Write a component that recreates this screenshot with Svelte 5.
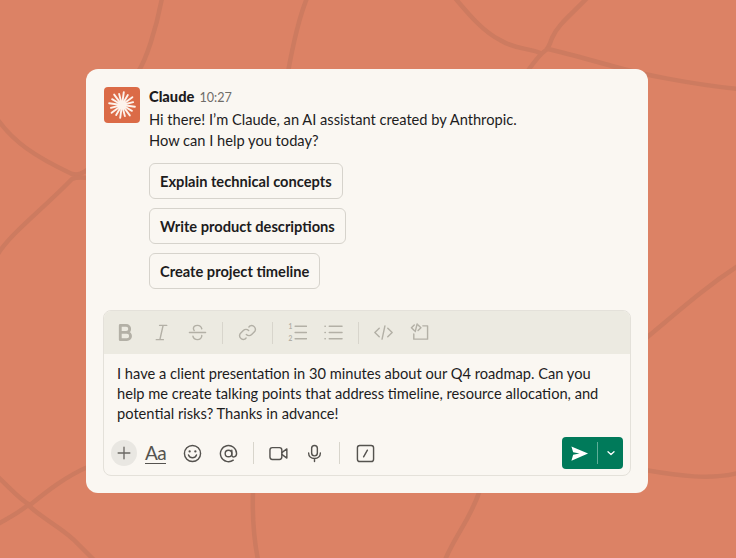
<script>
	const prompts = ['Explain technical concepts', 'Write product descriptions', 'Create project timeline'];
	const rays = Array.from({ length: 16 }, (_, i) => i * 22.5);
</script>

<div class="page">
	<svg class="veins" viewBox="0 0 736 558" aria-hidden="true">
		<g fill="none" stroke="#cd7b60" stroke-width="4.5" stroke-linecap="round">
			<path d="M162 -2C156 30 146 60 138 72" />
			<path d="M307 -2C298 20 292 50 288 72" />
			<path d="M455 -2C470 16 484 32 500 40C516 50 530 48 540 53" />
			<path d="M587 -2C572 14 558 24 552 38C550 44 548 48 546 50C540 54 534 62 527 72" />
			<path d="M548 49C570 54 590 60 612 66C640 74 690 84 738 89" />
			<path d="M-2 120C14 142 34 156 72 174C80 176 84 172 90 168" />
			<path d="M-2 254C10 234 44 208 72 179C78 176 84 178 90 178" />
			<path d="M-2 477C10 488 20 500 30 505C46 492 66 476 90 466" />
			<path d="M-2 524C12 516 20 512 28 505C44 520 66 530 78 544C84 550 90 556 94 560" />
			<path d="M253 490C252 520 254 540 258 560" />
			<path d="M480 490C470 520 456 534 445 560" />
			<path d="M645 339C680 310 704 288 738 266" />
			<path d="M645 470C680 476 710 480 738 473" />
		</g>
	</svg>

	<div class="card">
		<div class="message">
			<div class="avatar">
				<svg viewBox="0 0 36 36" width="36" height="36">
					{#each rays as angle, i}
						<path
							d="M18 14L18 {i % 2 ? 6.500 : 5}"
							transform="rotate({angle + 8} 18 18)"
							stroke="#fdf3ec"
							stroke-width="1.900"
							stroke-linecap="round"
						/>
					{/each}
					<circle cx="18" cy="18" r="4.500" fill="#fdf3ec" />
				</svg>
			</div>
			<div class="body">
				<div class="meta"><strong>Claude</strong><span>10:27</span></div>
				<p>Hi there! I’m Claude, an AI assistant created by Anthropic.<br />How can I help you today?</p>
				<div class="prompts">
					{#each prompts as prompt}
						<button>{prompt}</button>
					{/each}
				</div>
			</div>
		</div>

		<div class="editor">
			<div class="format">
				<svg class="i b" viewBox="0 0 20 20"><path d="M4.500 2.500h6.200a3.700 3.700 0 0 1 0 7.400H4.500zM4.500 9.900h7a3.800 3.800 0 0 1 0 7.600h-7z" /></svg>
				<svg class="i" viewBox="0 0 20 20"><path d="M8 2.500h7.500M4.500 17.500h7.500M11.700 2.500 8.300 17.500" /></svg>
				<svg class="i" viewBox="0 0 20 20"><path d="M1.500 10h17M14.500 6C13.900 3.800 12 2.500 10 2.500c-2.400 0-4.300 1.300-4.300 3.400 0 .8.300 1.500.8 2M14.500 13c.2 3-2 4.500-4.500 4.500-2.600 0-4.400-1.300-4.800-3.600" /></svg>
				<i class="sep"></i>
				<svg class="i" viewBox="0 0 20 20"><path d="M11.500 4.300l1.300-1.300a4 4 0 0 1 5 5.600l-3.400 3.400a4 4 0 0 1-5.600 0M8.500 15.700l-1.300 1.300a4 4 0 0 1-5-5.600l3.400-3.400a4 4 0 0 1 5.600 0" /></svg>
				<i class="sep"></i>
				<svg class="i" viewBox="0 0 20 20"><path d="M7.500 3.500h12M7.500 10h12M7.500 16.500h12" /><text x="0.500" y="6.500">1</text><text x="0.500" y="18.500">2</text></svg>
				<svg class="i" viewBox="0 0 20 20"><path d="M5.500 3.500h13.500M5.500 10h13.500M5.500 16.500h13.500M1 3.500h.4M1 10h.4M1 16.500h.4" /></svg>
				<i class="sep"></i>
				<svg class="i" viewBox="0 0 20 20"><path d="M5.500 5.500.9 10l4.600 4.500M14.500 5.500l4.600 4.500-4.600 4.500M11.500 3 8.500 17" /></svg>
				<svg class="i" viewBox="0 0 20 20"><path d="M4.500 2 1.500 5l3 3M8.500 8l3-3-3-3M5.500 9l2-8M13.500 3h5v14H4v-5.500" /></svg>
			</div>
			<div class="draft">I have a client presentation in 30 minutes about our Q4 roadmap. Can you help me create talking points that address timeline, resource allocation, and potential risks? Thanks in advance!</div>
			<div class="actions">
				<span class="plus"><svg viewBox="0 0 20 20" width="18" height="18"><path d="M10 3.500v13M3.500 10h13" /></svg></span>
				<span class="aa">Aa</span>
				<svg class="a" viewBox="0 0 20 20"><circle cx="10" cy="10" r="8.500" /><path d="M5.800 11.500c.8 2 2.200 3 4.200 3s3.400-1 4.200-3" /><circle class="dot" cx="7" cy="7.800" r="1.200" /><circle class="dot" cx="13" cy="7.800" r="1.200" /></svg>
				<svg class="a" viewBox="0 0 20 20"><circle cx="10" cy="10" r="3.500" /><path d="M13.500 6.500v5c0 3.500 5 2.500 5-1.500a8.500 8.500 0 1 0-3.500 7" /></svg>
				<i class="sep low"></i>
				<svg class="a" viewBox="0 0 20 20"><rect x="1" y="3.800" width="12.500" height="12.500" rx="2.500" /><path d="M13.500 9 18.800 5.200v9.600L13.500 11" /></svg>
				<svg class="a" viewBox="0 0 20 20"><rect x="7" y="1.500" width="6" height="11" rx="3" /><path d="M3.800 9.500c0 3.500 2.600 5.800 6.200 5.800s6.200-2.300 6.200-5.800M10 15.300v3.200" /></svg>
				<i class="sep low"></i>
				<svg class="a" viewBox="0 0 20 20"><rect x="1.500" y="1.500" width="17" height="17" rx="2.500" /><path d="M12 6.500 8 13.500" /></svg>
				<div class="send">
					<span class="go"><svg viewBox="0 0 20 20" width="19" height="19"><path d="M1.500 2.500 19 10 1.500 17.500l1.800-6.300L10 10 3.300 8.800z" /></svg></span>
					<span class="more"><svg viewBox="0 0 10 10" width="10" height="10"><path d="M2 3.800 5 6.600l3-2.800" /></svg></span>
				</div>
			</div>
		</div>
	</div>
</div>

<style>
	:global(body) {
		background: #dc8265;
	}

	.page {
		position: relative;
		box-sizing: border-box;
		width: 736px;
		height: 558px;
		padding: 69px 88px 65px 86px;
		background: #dc8265;
		overflow: hidden;
		font-family: Lato, 'Liberation Sans', sans-serif;
		color: #1d1c1d;
	}

	.veins {
		position: absolute;
		inset: 0;
		width: 100%;
		height: 100%;
	}

	.card {
		position: relative;
		box-sizing: border-box;
		height: 424px;
		padding: 18px 17px 17px 17px;
		display: flex;
		flex-direction: column;
		justify-content: space-between;
		background: #faf7f2;
		border-radius: 12px;
	}

	.message {
		display: flex;
		gap: 9px;
		padding-left: 1px;
	}

	.avatar {
		flex: none;
		width: 36px;
		height: 36px;
		border-radius: 4px;
		background: #db6b47;
	}

	.avatar svg {
		display: block;
	}

	.meta {
		display: flex;
		align-items: baseline;
		gap: 5px;
		line-height: 20px;
	}

	.meta strong {
		font-size: 14.650px;
		font-weight: 900;
	}

	.meta span {
		font-size: 12.600px;
		color: #6f6c68;
	}

	p {
		margin: 1px 0 0;
		font-size: 14.650px;
		line-height: 21px;
	}

	.prompts {
		display: flex;
		flex-direction: column;
		align-items: flex-start;
		gap: 9px;
		margin-top: 12px;
	}

	button {
		height: 36px;
		padding: 0 10px;
		font: 700 14.650px Lato, 'Liberation Sans', sans-serif;
		color: #1d1c1d;
		background: #faf7f2;
		border: 1px solid #d6d3cc;
		border-radius: 6px;
	}

	.editor {
		border: 1px solid #e4e1da;
		border-radius: 8px;
		overflow: hidden;
	}

	.format {
		height: 43px;
		padding: 0 11.500px;
		display: flex;
		align-items: center;
		gap: 15px;
		background: #eceae1;
	}

	.format .i {
		width: 19px;
		height: 19px;
		fill: none;
		stroke: #b3b0a6;
		stroke-width: 1.500;
		stroke-linecap: round;
		stroke-linejoin: round;
		flex: none;
	}

	.format .i + .i {
		margin-left: 2px;
	}

	.format .b {
		stroke-width: 3;
	}

	.format text {
		font-size: 7px;
		font-weight: 700;
		fill: #b3b0a6;
		stroke: none;
	}

	.sep {
		flex: none;
		width: 1px;
		height: 22px;
		background: #d8d5cc;
	}

	.draft {
		padding: 10px 13px 0;
		font-size: 14.650px;
		line-height: 20px;
		height: 77px;
		box-sizing: border-box;
	}

	.actions {
		height: 44px;
		padding: 0 7px;
		display: flex;
		align-items: center;
	}

	.plus {
		display: flex;
		align-items: center;
		justify-content: center;
		width: 26px;
		height: 26px;
		border-radius: 50%;
		background: #e9e7e2;
		margin-right: 8px;
	}

	.plus svg {
		fill: none;
		stroke: #6b6964;
		stroke-width: 1.500;
		stroke-linecap: round;
	}

	.aa {
		font-size: 19px;
		line-height: 20px;
		color: #55534f;
		border-bottom: 1px solid #55534f;
		margin-right: 16.500px;
		letter-spacing: -0.500px;
	}

	.a {
		flex: none;
		width: 19px;
		height: 19px;
		margin-right: 17px;
		fill: none;
		stroke: #55534f;
		stroke-width: 1.500;
		stroke-linecap: round;
		stroke-linejoin: round;
	}

	.a .dot {
		fill: #55534f;
		stroke: none;
	}

	.sep.low {
		margin: 0 15.500px 0 -2px;
	}

	.send {
		margin-left: auto;
		display: flex;
		align-items: center;
		width: 61px;
		height: 32px;
		border-radius: 4px;
		background: #007a5a;
	}

	.go {
		display: flex;
		align-items: center;
		justify-content: center;
		width: 35px;
		height: 22px;
		border-right: 1px solid #5fae98;
	}

	.go svg {
		fill: #fff;
	}

	.more {
		display: flex;
		justify-content: center;
		flex: 1;
	}

	.more svg {
		fill: none;
		stroke: #fff;
		stroke-width: 1.300;
		stroke-linecap: round;
		stroke-linejoin: round;
	}
</style>
